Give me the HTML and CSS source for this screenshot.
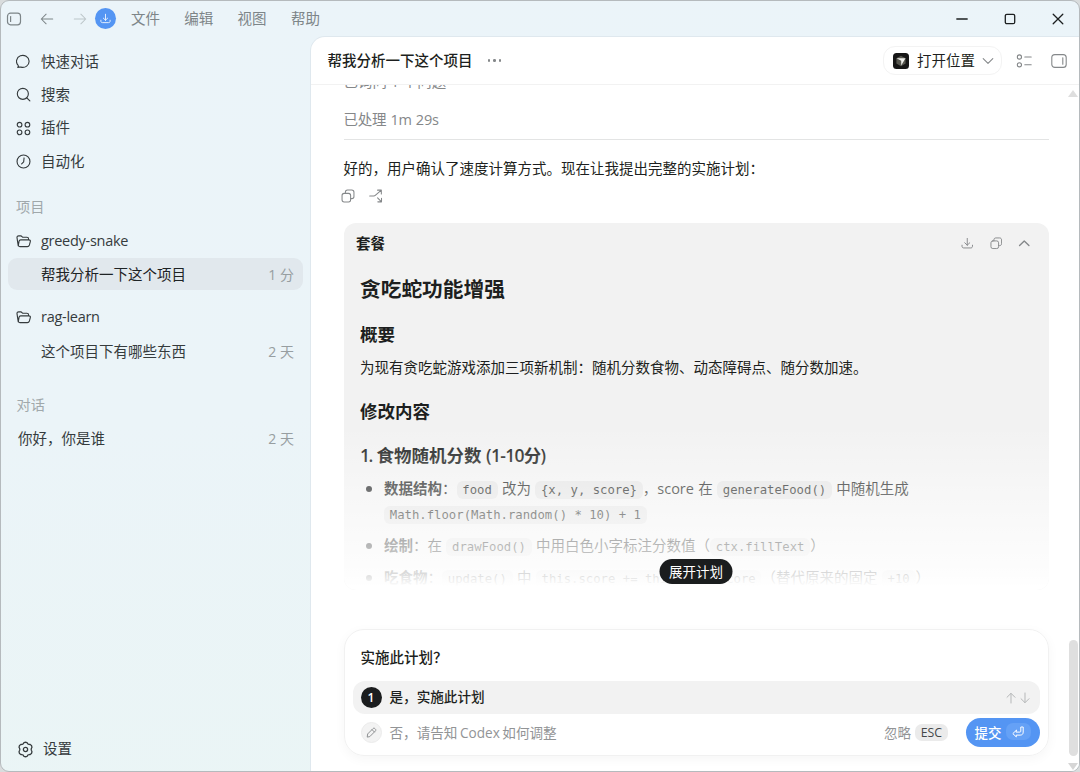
FILE: index.html
```html
<!DOCTYPE html>
<html lang="zh-CN">
<head>
    <meta charset="UTF-8">
    <meta name="viewport" content="width=device-width, initial-scale=1.0">
    <title>Codex</title>
    <link rel="stylesheet" href="styles.css">
</head>
<body>
    <!-- Shared icons -->
    <svg class="sprite" width="0" height="0">
        <symbol id="i-panel" viewBox="0 0 16 16"><rect x="1.5" y="2.2" width="13" height="11.6" rx="3"/><path d="M4.6 5.5v5"/></symbol>
        <symbol id="i-folder" viewBox="0 0 16 16"><path d="M2.4 12.6 1.1 4.2C.9 2.8 1.6 2 2.9 2h2.2c1.3 0 1.3 1.5 2.6 1.5h3.8c1.3 0 2 .7 2 2v.6M5 6.2h8.7c1.4 0 1.9.9 1.5 2.2l-.9 3.3c-.4 1.2-1 1.7-2.2 1.7H4.2c-1.2 0-1.9-.9-1.6-2.1l.7-3.6c.2-1 .7-1.5 1.700-1.5z"/></symbol>
        <symbol id="i-copy" viewBox="0 0 16 16"><rect x="1.2" y="5" width="9.8" height="9.8" rx="2.4"/><path d="M5 4.800V3.700c0-1.500.9-2.500 2.400-2.500h4.900c1.500 0 2.500 1 2.500 2.500v4.900c0 1.500-1 2.400-2.500 2.400h-1.100"/></symbol>
        <symbol id="i-download" viewBox="0 0 16 16"><path d="M8 1.8v8.7M4.8 7.400 8 10.500l3.200-3.100M1.300 10.500v1.300c0 1.400.8 2.200 2.200 2.200h9c1.400 0 2.200-.8 2.200-2.200v-1.300"/></symbol>
    </svg>

    <div class="window">
        <!-- Title bar -->
        <header class="titlebar">
            <svg class="icon t-panel"><use href="#i-panel"/></svg>
            <svg class="icon t-back" viewBox="0 0 16 16"><path d="M14.500 8h-13M7 2.500 1.500 8 7 13.500"/></svg>
            <svg class="icon t-forward" viewBox="0 0 16 16"><path d="M1.500 8h13M9 2.500 14.500 8 9 13.500"/></svg>
            <span class="update"><svg class="icon"><use href="#i-download"/></svg></span>
            <nav class="menu">
                <span>文件</span>
                <span>编辑</span>
                <span>视图</span>
                <span>帮助</span>
            </nav>
            <div class="controls">
                <svg class="icon" viewBox="0 0 12 12"><path d="M.8 6h10.400"/></svg>
                <svg class="icon" viewBox="0 0 12 12"><rect x="1.3" y="1.3" width="9.4" height="9.4" rx="1.5"/></svg>
                <svg class="icon" viewBox="0 0 12 12"><path d="m1.200 1.200 9.600 9.600M10.800 1.200l-9.600 9.600"/></svg>
            </div>
        </header>

        <div class="layout">
            <!-- Sidebar -->
            <aside class="sidebar">
                <div class="nav-item">
                    <svg class="icon" viewBox="0 0 16 16"><path d="M1.800 14.200c.7-.6.9-1.200.5-2A6.700 6.400 0 1 1 5.300 14c-.8-.2-2.100.2-3.500.2z"/></svg>
                    <span>快速对话</span>
                </div>
                <div class="nav-item">
                    <svg class="icon" viewBox="0 0 16 16"><circle cx="7.300" cy="7.300" r="5.900"/><path d="m11.500 11.500 3.300 3.300"/></svg>
                    <span>搜索</span>
                </div>
                <div class="nav-item">
                    <svg class="icon" viewBox="0 0 16 16"><circle cx="3.800" cy="3.900" r="2.500"/><circle cx="12.200" cy="3.900" r="2.500"/><circle cx="3.800" cy="12.100" r="2.500"/><circle cx="12.200" cy="12.100" r="2.500"/></svg>
                    <span>插件</span>
                </div>
                <div class="nav-item">
                    <svg class="icon" viewBox="0 0 16 16"><circle cx="8" cy="8" r="6.900"/><path d="M8.600 4.200 8.200 8.300 6 10.600"/></svg>
                    <span>自动化</span>
                </div>

                <div class="section-label">项目</div>
                <div class="nav-item folder">
                    <svg class="icon"><use href="#i-folder"/></svg>
                    <span>greedy-snake</span>
                </div>
                <div class="thread active">
                    <span>帮我分析一下这个项目</span>
                    <time>1 分</time>
                </div>
                <div class="nav-item folder second">
                    <svg class="icon"><use href="#i-folder"/></svg>
                    <span>rag-learn</span>
                </div>
                <div class="thread">
                    <span>这个项目下有哪些东西</span>
                    <time>2 天</time>
                </div>

                <div class="section-label chats">对话</div>
                <div class="thread flat">
                    <span>你好，你是谁</span>
                    <time>2 天</time>
                </div>

                <div class="settings">
                    <svg class="icon" viewBox="0 0 16 16"><path d="M6.500 1.600c.9-.5 2.100-.5 3 0l.7 1.100c.2.300.6.500 1 .5l1.300.1c1 .5 1.600 1.500 1.600 2.600l-.6 1.200c-.2.500-.2 1.200 0 1.700l.6 1.300c0 1.100-.6 2.100-1.600 2.600l-1.300.1c-.4 0-.8.2-1 .5l-.7 1.100c-.9.500-2.100.5-3 0l-.7-1.100c-.2-.3-.6-.5-1-.5l-1.300-.1c-1-.5-1.600-1.500-1.600-2.600l.6-1.300c.2-.5.2-1.200 0-1.700l-.6-1.200c0-1.100.6-2.100 1.600-2.600l1.300-.1c.4 0 .8-.2 1-.5z"/><circle cx="8" cy="8" r="2"/></svg>
                    <span>设置</span>
                </div>
            </aside>

            <!-- Conversation -->
            <main class="main">
                <div class="main-header">
                    <h1>帮我分析一下这个项目</h1>
                    <span class="more"><i></i><i></i><i></i></span>
                    <div class="open-in">
                        <svg class="app-icon" viewBox="0 0 16 16"><rect width="16" height="16" rx="3.5" fill="#161616"/><path d="M8 2.800 12.600 5.200v5.400L8 13.200l-4.600-2.600V5.200z" fill="#57574f"/><path d="M3.600 5.300h8.900L8.200 12.600V7.800z" fill="#f0f0ec"/></svg>
                        <span>打开位置</span>
                        <svg class="icon chevron" viewBox="0 0 12 12"><path d="m1.200 3.700 4.800 4.600 4.800-4.600"/></svg>
                    </div>
                    <svg class="icon h-list" viewBox="0 0 16 16"><circle cx="3.400" cy="4" r="2.100"/><circle cx="3.400" cy="11.800" r="2.100"/><path d="M8.800 4h6.400M8.800 11.800h6.400"/></svg>
                    <svg class="icon h-panel" viewBox="0 0 16 16"><rect x=".8" y="1.600" width="14.400" height="12.800" rx="3"/><path d="M11.800 4.800v6.400"/></svg>
                </div>

                <div class="scroll">
                    <div class="content">
                        <p class="asked">已询问 1 个问题</p>
                        <p class="processed">已处理 1m 29s</p>
                        <p class="reply">好的，用户确认了速度计算方式。现在让我提出完整的实施计划：</p>
                        <div class="actions">
                            <svg class="icon"><use href="#i-copy"/></svg>
                            <svg class="icon" viewBox="0 0 16 16"><path d="M.8 8h4.400c1.200 0 1.800-.4 2.600-1.200l6-5.300M9.800 1.300h4.300v4.300M9.800 10.200l4.300 4.300M14.300 10.600v4.100h-4.200"/></svg>
                        </div>

                        <section class="plan">
                            <div class="plan-header">
                                <strong>套餐</strong>
                                <svg class="icon"><use href="#i-download"/></svg>
                                <svg class="icon"><use href="#i-copy"/></svg>
                                <svg class="icon up" viewBox="0 0 12 12"><path d="M1.500 8.200 6 3.800l4.500 4.400"/></svg>
                            </div>
                            <div class="plan-body">
                                <h2>贪吃蛇功能增强</h2>
                                <h3>概要</h3>
                                <p>为现有贪吃蛇游戏添加三项新机制：随机分数食物、动态障碍点、随分数加速。</p>
                                <h3>修改内容</h3>
                                <h4><span class="index">1.</span> 食物随机分数 <span class="range">(1-10分)</span></h4>
                                <ul>
                                    <li><b>数据结构</b>：<code>food</code> 改为 <code>{x, y, score}</code>，score 在 <code>generateFood()</code> 中随机生成<br><code>Math.floor(Math.random() * 10) + 1</code></li>
                                    <li><b>绘制</b>：在 <code>drawFood()</code> 中用白色小字标注分数值（<code>ctx.fillText</code>）</li>
                                    <li><b>吃食物</b>：<code>update()</code> 中 <code>this.score += this.food.score</code>（替代原来的固定 <code>+10</code>）</li>
                                </ul>
                            </div>
                            <div class="fade"></div>
                            <button class="expand">展开计划</button>
                        </section>

                        <!-- Plan confirmation -->
                        <section class="confirm">
                            <h5>实施此计划？</h5>
                            <div class="option selected">
                                <span class="num">1</span>
                                <span class="label">是，实施此计划</span>
                                <svg class="icon" viewBox="0 0 12 12"><path d="M6 11V1.500M2 5.300l4-4 4 4"/></svg>
                                <svg class="icon" viewBox="0 0 12 12"><path d="M6 1v9.500M2 6.700l4 4 4-4"/></svg>
                            </div>
                            <div class="option">
                                <span class="num pencil"><svg class="icon" viewBox="0 0 12 12"><path d="m1.400 10.600.4-3L7.600 1.800c.7-.7 1.500-.7 2.200 0l.4.4c.7.7.7 1.500 0 2.200l-5.800 5.800zM6.600 2.900l2.500 2.500"/></svg></span>
                                <span class="label">否，请告知 Codex 如何调整</span>
                                <span class="skip">忽略</span>
                                <kbd>ESC</kbd>
                                <button class="submit">提交
                                    <span class="enter"><svg class="icon" viewBox="0 0 12 12"><path d="M4.300 4.300.8 7.600l3.500 3.300V9.100h3.900c1.900 0 3-1.100 3-3V1H8.800v4.200c0 .6-.3.900-.9.900H4.300z"/></svg></span>
                                </button>
                            </div>
                        </section>
                    </div>

                    <div class="scrollbar">
                        <span class="arrow-up"></span>
                        <span class="thumb"></span>
                        <span class="arrow-down"></span>
                    </div>
                </div>
            </main>
        </div>
    </div>
</body>
</html>
```
FILE: styles.css
```css
* {
    box-sizing: border-box;
}

body {
    margin: 0;
    height: 772px;
    overflow: hidden;
    background: #d9dcdd;
    font-family: "Open Sans", "Noto Sans CJK SC", sans-serif;
    font-size: 14.5px;
    line-height: 20px;
    color: #1d1f20;
}

h1, h2, h3, h4, h5, p, ul {
    margin: 0;
    padding: 0;
}

.sprite {
    display: none;
}

.icon {
    width: 14px;
    height: 14px;
    flex: none;
    fill: none;
    stroke: currentColor;
    stroke-width: 1.2;
    stroke-linecap: round;
    stroke-linejoin: round;
}

.window {
    height: 772px;
    border: 1px solid #b5babd;
    border-radius: 9px;
    overflow: hidden;
    display: flex;
    flex-direction: column;
    background: linear-gradient(175deg, #ebf4f9 0%, #ebf4f8 50%, #eaf5f5 100%);
}

/* Title bar */
.titlebar {
    height: 36px;
    flex: none;
    display: flex;
    align-items: center;
    padding-left: 5px;
    padding-bottom: 1px;
    color: #7d8588;
}

.t-panel {
    width: 16px;
    height: 16px;
}

.t-back {
    margin-left: 18px;
}

.t-forward {
    margin-left: 19px;
    color: #bcc5c9;
}

.update {
    width: 21px;
    height: 21px;
    margin-left: 8px;
    border-radius: 50%;
    background: #5495f3;
    color: #fff;
    display: flex;
    align-items: center;
    justify-content: center;
}

.update .icon {
    width: 11px;
    height: 11px;
}

.menu {
    display: flex;
    gap: 24.3px;
    margin-left: 15px;
}

.controls {
    display: flex;
    gap: 36px;
    margin-left: auto;
    margin-right: 15px;
    color: #1c1f20;
}

.controls .icon {
    width: 12px;
    height: 12px;
    stroke-width: 1.3;
}

.layout {
    flex: 1;
    min-height: 0;
    display: flex;
}

/* Sidebar */
.sidebar {
    width: 310px;
    flex: none;
    display: flex;
    flex-direction: column;
    padding: 8px 8px 5px 7px;
    color: #353b3d;
}

.nav-item {
    height: 33.3px;
    display: flex;
    align-items: center;
    gap: 10px;
    padding-left: 8px;
}

.nav-item .icon {
    width: 15px;
    height: 15px;
}

.section-label {
    margin: 19px 0 8px 8px;
    color: #a0a8ab;
    font-size: 14.2px;
    line-height: 20px;
}

.folder {
    height: 32px;
    letter-spacing: -0.28px;
}

.folder.second {
    margin-top: 11px;
}

.thread {
    height: 32px;
    margin-top: 1px;
    display: flex;
    align-items: center;
    justify-content: space-between;
    padding: 2px 9px 0 33px;
    border-radius: 9px;
}

.thread time {
    color: #979ea1;
    font-size: 14px;
}

.thread.active {
    background: #e1e8ed;
    color: #1e2325;
}

.folder.second + .thread {
    margin-top: 2px;
}

.section-label.chats {
    margin: 28px 0 7px 8.5px;
}

.thread.flat {
    margin-top: 0;
    padding-left: 10px;
}

.settings {
    margin-top: auto;
    height: 34px;
    display: flex;
    align-items: center;
    gap: 9px;
    padding-left: 9px;
}

.settings .icon {
    width: 17px;
    height: 17px;
}

/* Main panel */
.main {
    flex: 1;
    min-width: 0;
    display: flex;
    flex-direction: column;
    background: #fff;
    border-radius: 14px 0 0 0;
    box-shadow: 0 0 0 1px #dfe8ee;
}

.main-header {
    height: 48px;
    flex: none;
    display: flex;
    align-items: center;
    padding: 0 12px 0 16.5px;
    border-bottom: 1px solid #f2f2f2;
}

.main-header h1 {
    font-size: 14.5px;
    font-weight: 500;
}

.more {
    display: flex;
    gap: 3px;
    margin-left: 15.5px;
}

.more i {
    width: 2.4px;
    height: 2.4px;
    border-radius: 50%;
    background: #85888a;
}

.open-in {
    height: 29px;
    margin-left: auto;
    display: flex;
    align-items: center;
    padding: 0 7px 0 9px;
    border: 1px solid #f3f3f3;
    border-radius: 12px;
}

.app-icon {
    width: 16px;
    height: 16px;
    margin-right: 8px;
}

.chevron {
    width: 12px;
    height: 12px;
    margin-left: 7px;
    color: #85888a;
    stroke-width: 1.1;
}

.h-list, .h-panel {
    width: 16px;
    height: 16px;
    color: #85888a;
    stroke-width: 1.1;
}

.h-list {
    margin-left: 13.5px;
}

.h-panel {
    margin-left: 19.5px;
}

.scroll {
    flex: 1;
    min-height: 0;
    display: flex;
    overflow: hidden;
}

.content {
    flex: 1;
    margin: -13px 19.5px 0 32.5px;
}

.asked, .processed {
    color: #858789;
}

.processed {
    margin-top: 18px;
    padding-bottom: 9px;
    border-bottom: 1px solid #e3e4e4;
    letter-spacing: -0.2px;
    word-spacing: 0.5px;
}

.reply {
    margin-top: 19px;
}

.actions {
    display: flex;
    gap: 14px;
    margin: 10px 0 0 -2.5px;
    color: #85888a;
}

/* Plan card */
.plan {
    position: relative;
    height: 367px;
    margin-top: 20px;
    border-radius: 12px;
    background: #f2f2f2;
    overflow: hidden;
}

.plan-header {
    height: 41px;
    display: flex;
    align-items: center;
    padding: 0 18px 0 12.5px;
    gap: 16px;
    color: #85888a;
}

.plan-header strong {
    margin-right: auto;
    font-weight: 700;
    color: #1d1f20;
}

.plan-header .icon {
    width: 12.5px;
    height: 12.5px;
}

.plan-header .up {
    stroke-width: 1.3;
}

.plan-body {
    padding: 0 16.5px;
    white-space: nowrap;
}

.plan-body h2 {
    margin-top: 10px;
    font-size: 20.7px;
    line-height: 30px;
}

.plan-body h3 {
    margin-top: 17px;
    font-size: 17.5px;
    line-height: 26px;
}

.plan-body p {
    margin-top: 11px;
}

.plan-body p + h3 {
    margin-top: 20px;
}

.plan-body h4 {
    margin-top: 18px;
    font-size: 17.5px;
    line-height: 26px;
    font-weight: 600;
}

.plan-body .index {
    letter-spacing: -1.4px;
}

.plan-body .range {
    letter-spacing: -0.7px;
}

.plan-body ul {
    list-style: none;
    margin-top: 8px;
}

.plan-body li {
    position: relative;
    padding-left: 24px;
    line-height: 25px;
    margin-bottom: 7px;
    word-spacing: 0.5px;
}

.plan-body li::before {
    content: "";
    position: absolute;
    left: 6px;
    top: 10px;
    width: 6px;
    height: 6px;
    border-radius: 50%;
    background: #1d1f20;
}

.plan-body code {
    padding: 2px 5.8px;
    border-radius: 6px;
    background: #e4e4e4;
    font-family: "DejaVu Sans Mono", monospace;
    font-size: 12.28px;
    line-height: 1;
    word-spacing: 0;
}

.fade {
    position: absolute;
    left: 0;
    right: 0;
    bottom: 0;
    height: 165px;
    background: linear-gradient(rgba(255, 255, 255, 0), rgba(255, 255, 255, 0.84) 90%, #fff 98%);
}

.expand {
    position: absolute;
    left: 50%;
    bottom: 6px;
    transform: translateX(-50%);
    width: 73px;
    height: 25px;
    padding: 0;
    border: none;
    border-radius: 13px;
    background: #1b1d1e;
    color: #fff;
    font-family: inherit;
    font-size: 13.5px;
    line-height: 20px;
}

/* Confirmation box */
.confirm {
    height: 127px;
    margin-top: 39px;
    padding: 18px 8px 0;
    border: 1px solid #f1f1f1;
    border-radius: 20px;
    box-shadow: 0 3px 12px rgba(0, 0, 0, 0.04);
}

.confirm h5 {
    margin-left: 8px;
    font-size: 14.5px;
    font-weight: 500;
}

.option {
    height: 37px;
    display: flex;
    align-items: center;
    padding-left: 8px;
    font-size: 13.6px;
    color: #929496;
}

.option.selected {
    height: 33px;
    margin-top: 13px;
    padding-right: 9px;
    border-radius: 12px;
    background: #f2f2f2;
    color: #b5b7b8;
}

.option.selected .label {
    margin-top: -1px;
    font-weight: 500;
    color: #1d1f20;
}

.option.selected .icon {
    width: 12px;
    height: 12px;
    margin-left: 2px;
    stroke-width: 1;
}

.num {
    width: 21px;
    height: 21px;
    flex: none;
    border-radius: 50%;
    display: flex;
    align-items: center;
    justify-content: center;
    background: #1b1d1e;
    color: #fff;
    font-size: 12px;
    font-weight: 600;
}

.num.pencil {
    background: #f3f3f3;
    border: 1px solid #ebebeb;
    color: #85888a;
}

.pencil .icon {
    width: 11px;
    height: 11px;
    stroke-width: 1;
}

.label {
    margin-left: 8px;
    margin-right: auto;
    word-spacing: -1px;
}

kbd {
    margin: 0 18px 0 4px;
    padding: 0 5.5px;
    border-radius: 7px;
    background: #ebebeb;
    color: #444749;
    font-family: inherit;
    font-size: 12.3px;
    line-height: 17px;
}

.submit {
    width: 74px;
    height: 29px;
    flex: none;
    display: flex;
    align-items: center;
    gap: 4px;
    padding: 0 8px 2px 9px;
    border: none;
    border-radius: 15px;
    background: #5495f3;
    color: #fff;
    font-family: inherit;
    font-size: 13.5px;
    font-weight: 500;
    white-space: nowrap;
}

.enter {
    width: 25px;
    height: 17px;
    flex: none;
    display: flex;
    align-items: center;
    justify-content: center;
    border-radius: 7px;
    background: #65a1f6;
}

.enter .icon {
    width: 12px;
    height: 12px;
    stroke-width: 1;
}

/* Scrollbar */
.scrollbar {
    width: 11px;
    flex: none;
    display: flex;
    flex-direction: column;
    align-items: center;
    padding: 5px 1px 1px 0;
}

.arrow-up, .arrow-down {
    border: 5px solid transparent;
    border-top-width: 0;
    border-bottom: 7px solid #dedede;
}

.thumb {
    width: 9px;
    height: 116px;
    margin-top: auto;
    margin-bottom: 7px;
    border-radius: 5px;
    background: #dfdfdf;
}

.arrow-down {
    border-bottom: 0;
    border-top: 7px solid #d6d6d6;
}
```
